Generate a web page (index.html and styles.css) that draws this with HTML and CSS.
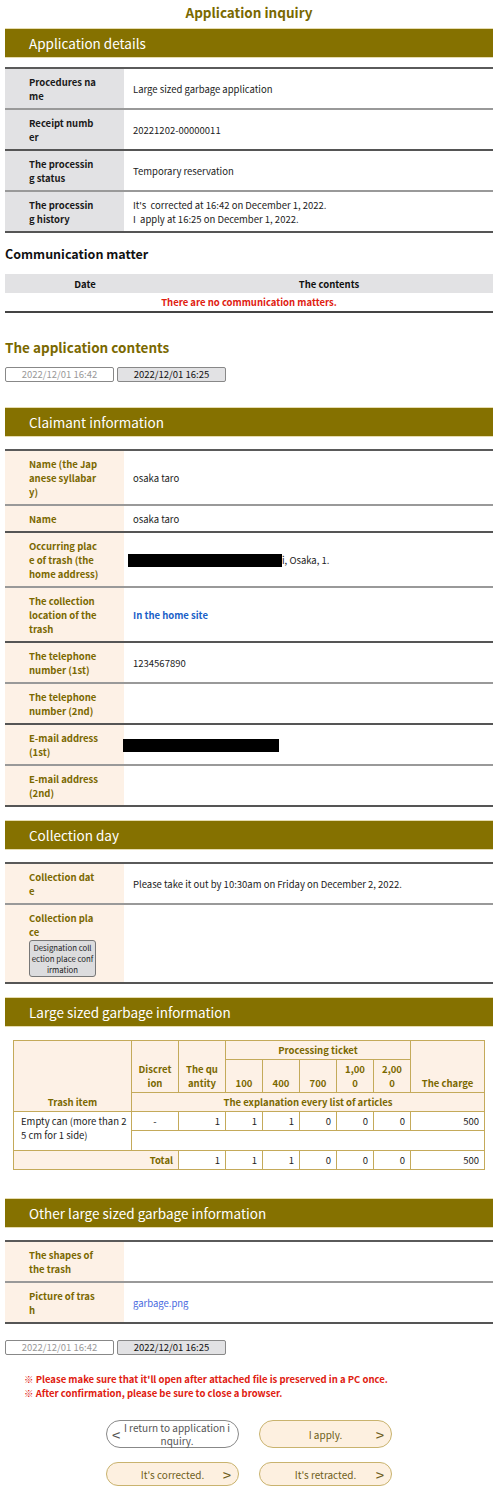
FILE: index.html
```html
<!DOCTYPE html>
<html>
<head>
  <title>Application inquiry</title>
  <meta name="viewport" content="width=device-width, initial-scale=1.0">
  <link rel="stylesheet" href="styles.css">
</head>
<body>
<div class="page">

  <h1 class="page-title">Application inquiry</h1>

  <h2 class="bar">Application details</h2>
  <table class="info info-gray">
    <colgroup><col class="col-label"><col></colgroup>
    <tr><th>Procedures name</th><td>Large sized garbage application</td></tr>
    <tr><th>Receipt number</th><td>20221202-00000011</td></tr>
    <tr><th>The processing status</th><td>Temporary reservation</td></tr>
    <tr><th>The processing history</th><td>It's&nbsp; corrected at 16:42 on December 1, 2022.<br>I&nbsp; apply at 16:25 on December 1, 2022.</td></tr>
  </table>

  <h3 class="sub-title">Communication matter</h3>
  <table class="comm">
    <colgroup><col class="col-date"><col></colgroup>
    <tr><th>Date</th><th>The contents</th></tr>
    <tr><td colspan="2" class="comm-empty">There are no communication matters.</td></tr>
  </table>

  <h3 class="sub-title olive">The application contents</h3>
  <div class="tabs">
    <button class="tab">2022/12/01 16:42</button>
    <button class="tab tab-on">2022/12/01 16:25</button>
  </div>

  <h2 class="bar">Claimant information</h2>
  <table class="info info-wide">
    <colgroup><col class="col-label"><col></colgroup>
    <tr><th>Name (the Japanese syllabary)</th><td>osaka taro</td></tr>
    <tr><th>Name</th><td>osaka taro</td></tr>
    <tr><th>Occurring place of trash (the home address)</th><td><span class="redact redact-addr"></span>i, Osaka, 1.</td></tr>
    <tr><th class="wrap-word">The collection location of the trash</th><td><a class="strong-link">In the home site</a></td></tr>
    <tr><th class="wrap-word">The telephone number (1st)</th><td>1234567890</td></tr>
    <tr><th class="wrap-word">The telephone number (2nd)</th><td></td></tr>
    <tr><th class="wrap-word">E-mail address (1st)</th><td><span class="redact redact-mail"></span></td></tr>
    <tr><th class="wrap-word">E-mail address (2nd)</th><td></td></tr>
  </table>

  <h2 class="bar">Collection day</h2>
  <table class="info">
    <colgroup><col class="col-label"><col></colgroup>
    <tr><th>Collection date</th><td>Please take it out by 10:30am on Friday on December 2, 2022.</td></tr>
    <tr><th>Collection place<br><button class="small-btn">Designation collection place confirmation</button></th><td></td></tr>
  </table>

  <h2 class="bar">Large sized garbage information</h2>
  <table class="garbage">
    <colgroup>
      <col class="g-item"><col class="g-mid"><col class="g-mid">
      <col class="g-num"><col class="g-num"><col class="g-num"><col class="g-num"><col class="g-num">
      <col>
    </colgroup>
    <tr>
      <th rowspan="3" class="bottom">Trash item</th>
      <th rowspan="2" class="bottom disc">Discretion</th>
      <th rowspan="2" class="bottom">The quantity</th>
      <th colspan="5">Processing ticket</th>
      <th rowspan="2" class="bottom">The charge</th>
    </tr>
    <tr>
      <th class="bottom tk">100</th><th class="bottom tk">400</th><th class="bottom tk">700</th><th class="bottom tk">1,000</th><th class="bottom tk">2,000</th>
    </tr>
    <tr><th colspan="8">The explanation every list of articles</th></tr>
    <tr>
      <td rowspan="2" class="item">Empty can (more than 25 cm for 1 side)</td>
      <td class="center">-</td><td>1</td><td>1</td><td>1</td><td>0</td><td>0</td><td>0</td><td>500</td>
    </tr>
    <tr><td colspan="8" class="blank"></td></tr>
    <tr>
      <th colspan="2" class="total">Total</th>
      <td>1</td><td>1</td><td>1</td><td>0</td><td>0</td><td>0</td><td>500</td>
    </tr>
  </table>

  <h2 class="bar">Other large sized garbage information</h2>
  <table class="info">
    <colgroup><col class="col-label"><col></colgroup>
    <tr><th class="wrap-word">The shapes of the trash</th><td></td></tr>
    <tr><th>Picture of trash</th><td><a class="file-link">garbage.png</a></td></tr>
  </table>

  <div class="tabs tabs-bottom">
    <button class="tab">2022/12/01 16:42</button>
    <button class="tab tab-on">2022/12/01 16:25</button>
  </div>

  <div class="notes">
    <p>※ Please make sure that it'll open after attached file is preserved in a PC once.</p>
    <p>※ After confirmation, please be sure to close a browser.</p>
  </div>

  <div class="actions">
    <button class="act act-back"><span class="arrow arrow-left">&lt;</span><span class="act-text">I return to application inquiry.</span></button>
    <button class="act"><span class="act-text">I apply.</span><span class="arrow">&gt;</span></button>
    <button class="act act-short"><span class="act-text">It's corrected.</span><span class="arrow">&gt;</span></button>
    <button class="act act-short"><span class="act-text">It's retracted.</span><span class="arrow">&gt;</span></button>
  </div>

</div>
</body>
</html>
```

FILE: styles.css
```css
body {
  margin: 0;
  font-family: "Noto Sans CJK JP", "Noto Sans", sans-serif;
  font-size: 9.5px;
  color: #222;
  background-color: #fff;
}

.page {
  width: 488px;
  margin-left: 5px;
  padding-bottom: 8px;
}

.page-title {
  margin: 0;
  padding-top: 2px;
  height: 26px;
  font-size: 13.5px;
  line-height: 20px;
  text-align: center;
  color: #7a6800;
}

.bar {
  margin: 0;
  height: 30px;
  padding-left: 24px;
  background-color: #857100;
  border-top: 1px solid #e6dcb0;
  border-bottom: 1px solid #e6dcb0;
  box-sizing: border-box;
  color: #fff;
  font-size: 13.5px;
  font-weight: normal;
  line-height: 28px;
}

/* two column info tables */
.info {
  width: 100%;
  margin: 12px 0 13px;
  border-collapse: collapse;
  table-layout: fixed;
  border-top: 2px solid #5a5a5a;
}

.info-gray {
  margin: 9px 0 12px;
}

.col-label {
  width: 119px;
}

.info th,
.info td {
  padding: 6px 9px 5px;
  line-height: 14px;
  text-align: left;
  vertical-align: middle;
  border-bottom: 2px solid #999;
}

.info th {
  padding-left: 24px;
  padding-right: 27px;
  background-color: #fdf1e6;
  color: #7a6800;
  font-weight: bold;
  word-break: break-all;
}

.info-wide th {
  padding-right: 25px;
}

.info th.wrap-word {
  word-break: normal;
}

.info tr:nth-child(even) th,
.info tr:nth-child(even) td {
  border-bottom-color: #555;
}

.info-gray th {
  background-color: #e2e2e4;
  color: #1a1a1a;
}

.redact {
  display: inline-block;
  height: 13px;
  vertical-align: middle;
  background-color: #000;
}

.redact-addr {
  width: 154px;
  margin-left: -5px;
}

.redact-mail {
  width: 156px;
  margin-left: -10px;
}

.strong-link {
  color: #1a5fc8;
  font-weight: bold;
}

.file-link {
  color: #4a6ae0;
}

.small-btn {
  display: block;
  width: 67px;
  margin-top: 1px;
  padding: 1px 1.5px;
  border: 1px solid #777;
  border-radius: 3px;
  background-color: #dcdcde;
  color: #222;
  font-family: inherit;
  font-size: 7.8px;
  line-height: 11px;
  word-break: break-all;
}

/* communication */
.sub-title {
  margin: 0;
  font-size: 12.5px;
  line-height: 18px;
  color: #111;
}

.sub-title.olive {
  margin-top: 25px;
  font-size: 13.5px;
  color: #7a6800;
}

.comm {
  width: 100%;
  margin-top: 11px;
  border-collapse: collapse;
  table-layout: fixed;
  border-bottom: 2px solid #444;
}

.col-date {
  width: 160px;
}

.comm th {
  height: 19px;
  padding: 0;
  background-color: #e2e2e4;
  font-weight: bold;
  color: #111;
}

.comm-empty {
  height: 18px;
  padding: 0;
  text-align: center;
  color: #e02010;
  font-weight: bold;
}

/* date tabs */
.tabs {
  display: flex;
  gap: 3px;
  margin: 11px 0 25px;
}

.tab {
  width: 109px;
  height: 15px;
  padding: 0;
  border: 1px solid #888;
  border-radius: 2px;
  background-color: #fff;
  color: #999;
  font-family: inherit;
  font-size: 9.5px;
  line-height: 13px;
}

.tab-on {
  background-color: #e2e2e4;
  color: #111;
}

.tabs-bottom {
  margin: 16px 0 0;
}

/* garbage table */
.garbage {
  width: 472px;
  margin: 13px 0 28px 8px;
  border-collapse: collapse;
  table-layout: fixed;
}

.g-item { width: 118px; }
.g-mid { width: 47px; }
.g-num { width: 37px; }

.garbage th,
.garbage td {
  border: 1px solid #c4aa5a;
  padding: 2px 5px;
  line-height: 14px;
}

.garbage th {
  padding: 2px 7px;
  background-color: #fdf1e6;
  color: #7a6800;
  font-weight: bold;
  text-align: center;
  word-break: break-all;
}

.garbage th.disc {
  padding: 2px 6px;
}

.garbage th.tk {
  padding: 2px 8px;
}

.garbage th.bottom {
  vertical-align: bottom;
}

.garbage td {
  text-align: right;
  color: #222;
}

.garbage td.item {
  padding-left: 7px;
  padding-right: 3px;
  text-align: left;
  vertical-align: top;
  word-break: break-all;
}

.garbage td.center {
  text-align: center;
}

.garbage td.blank {
  height: 15px;
}

.garbage th.total {
  padding-right: 5px;
  text-align: right;
}

/* notes and buttons */
.notes {
  margin: 17px 0 0 19px;
  color: #e02010;
  font-weight: bold;
}

.notes p {
  margin: 0;
  line-height: 14px;
}

.actions {
  display: grid;
  grid-template-columns: 133px 133px;
  justify-content: center;
  column-gap: 20px;
  row-gap: 14px;
  margin-top: 20px;
}

.act {
  position: relative;
  height: 28px;
  padding: 0 18px;
  border: 1px solid #c9b36e;
  border-radius: 14px;
  background-color: #fdf0e0;
  color: #6e5e1a;
  font-family: inherit;
  font-size: 10px;
  line-height: 13px;
}

.act-short {
  height: 24px;
}

.act-back {
  padding: 0 7px 0 16px;
  background-color: #fff;
  border-color: #888;
  color: #555;
}

.act-text {
  display: block;
  word-break: break-all;
}

.arrow {
  position: absolute;
  right: 7px;
  top: 50%;
  transform: translateY(-50%);
  font-size: 15px;
  color: #6e5e1a;
}

.arrow-left {
  right: auto;
  left: 5px;
  color: #555;
}
```
